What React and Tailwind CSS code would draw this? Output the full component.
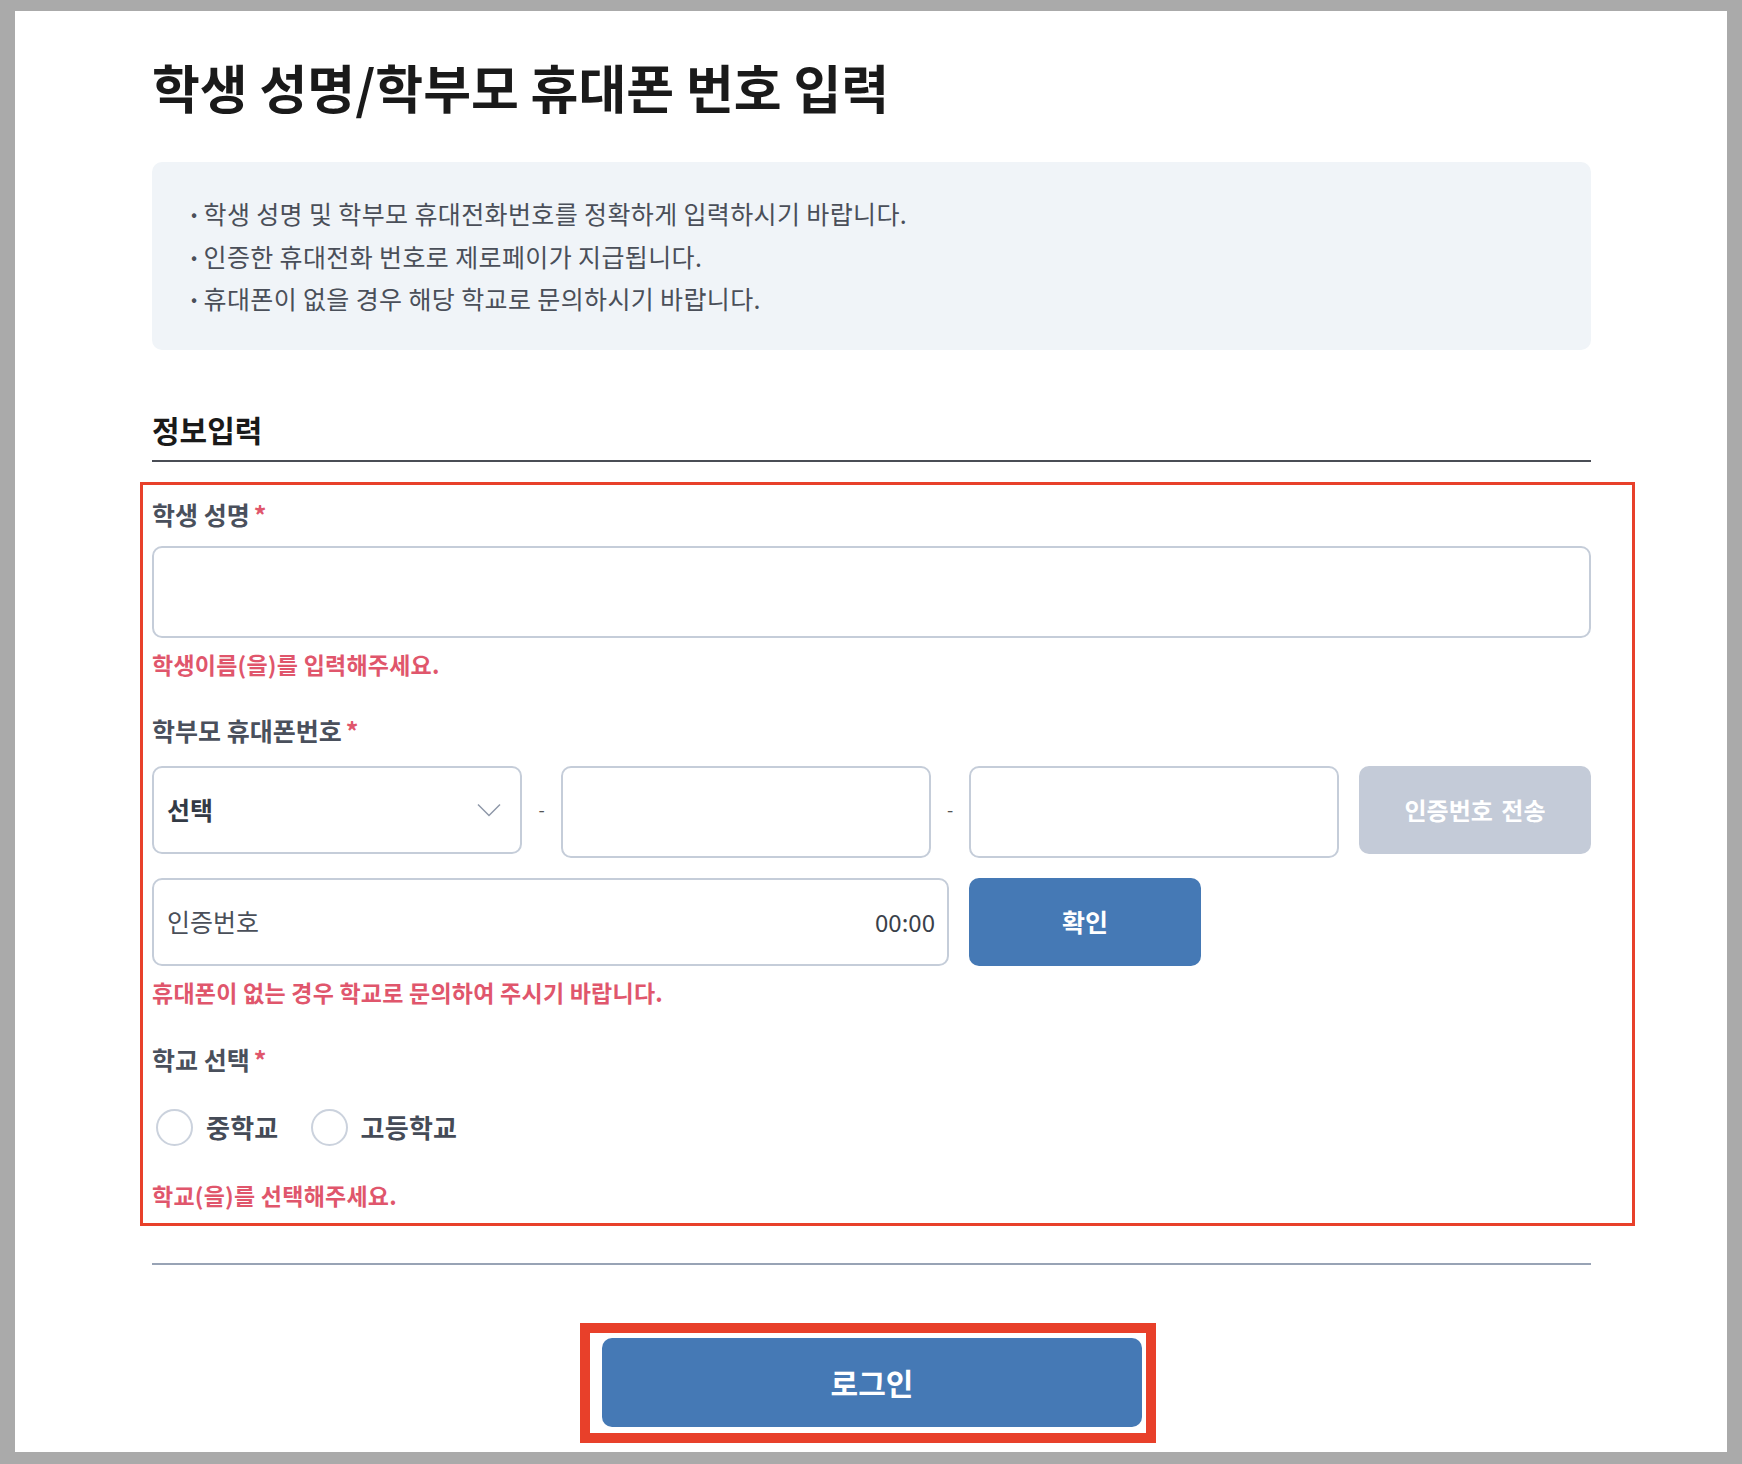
import React from "react";

const Req = () => <span className="ml-1 text-[#e0566c]">*</span>;

function Label({ children }) {
  return (
    <div className="text-[25px] font-bold leading-[32px] text-[#4a505c]">
      {children}
      <Req />
    </div>
  );
}

function Err({ children, className = "" }) {
  return (
    <div className={"text-[23px] font-semibold leading-[30px] text-[#e0566c] tracking-[0.01em] " + className}>
      {children}
    </div>
  );
}

function Radio({ label }) {
  return (
    <label className="flex items-center gap-[13px]">
      <span className="h-[37px] w-[37px] rounded-full border-2 border-[#cbd2dd] bg-white" />
      <span className="text-[26px] font-bold leading-[32px] text-[#454b57] tracking-[0.01em]">{label}</span>
    </label>
  );
}

export default function App() {
  return (
    <div className="min-h-[1464px] bg-[#aaaaaa] px-[15px] py-[11px] font-['Noto_Sans_CJK_KR','Noto_Sans',sans-serif]">
      <div className="bg-white pl-[137px] pr-[136px] pt-[42px] pb-[9px]">
        <h1 className="text-[52px] font-bold leading-[67px] text-[#1a1a1a]">
          학생 성명/학부모 휴대폰 번호 입력
        </h1>

        <div className="mt-[42px] rounded-[10px] bg-[#f0f4f8] px-[39px] py-[30px] text-[25px] leading-[42.5px] text-[#4a4f59] tracking-[0.015em]">
          <div className="flex"><span className="mr-[6px] text-[18px]">•</span>학생 성명 및 학부모 휴대전화번호를 정확하게 입력하시기 바랍니다.</div>
          <div className="flex"><span className="mr-[6px] text-[18px]">•</span>인증한 휴대전화 번호로 제로페이가 지급됩니다.</div>
          <div className="flex"><span className="mr-[6px] text-[18px]">•</span>휴대폰이 없을 경우 해당 학교로 문의하시기 바랍니다.</div>
        </div>

        <h2 className="mt-[59px] border-b-2 border-[#4a4d55] pb-[11px] text-[30px] font-bold leading-[40px] text-[#1a1a1a]">
          정보입력
        </h2>

        <div className="-ml-[12px] -mr-[44px] mt-[20px] border-[3px] border-[#e8402a] pl-[9px] pr-[41px] pt-[13px] pb-[13px]">
          <Label>학생 성명</Label>
          <input
            className="mt-[16px] block h-[92px] w-full rounded-[10px] border-2 border-[#c5cdd9] bg-white px-4 text-[23px] outline-none"
            type="text"
          />
          <Err className="mt-[11px]">학생이름(을)를 입력해주세요.</Err>

          <div className="mt-[35px]">
            <Label>학부모 휴대폰번호</Label>
          </div>
          <div className="mt-[20px] flex items-start">
            <div className="flex h-[88px] flex-1 items-center justify-between rounded-[10px] border-2 border-[#c5cdd9] bg-white pl-[13px] pr-[19px]">
              <span className="text-[25px] font-bold text-[#333a45]">선택</span>
              <svg width="24" height="14" viewBox="0 0 24 14" fill="none">
                <path d="M1 1.5 L12 12.5 L23 1.5" stroke="#8f98a8" strokeWidth="1.5" />
              </svg>
            </div>
            <div className="flex h-[88px] w-[39px] items-center justify-center text-[18px] text-[#555]">-</div>
            <input className="h-[92px] min-w-0 flex-1 rounded-[10px] border-2 border-[#c5cdd9] bg-white px-4 text-[23px] outline-none" type="text" />
            <div className="flex h-[88px] w-[38px] items-center justify-center text-[18px] text-[#555]">-</div>
            <input className="h-[92px] min-w-0 flex-1 rounded-[10px] border-2 border-[#c5cdd9] bg-white px-4 text-[23px] outline-none" type="text" />
            <button className="ml-[20px] h-[88px] w-[232px] rounded-[10px] bg-[#c4cbd8] text-[24px] font-bold text-white [word-spacing:3px]">
              인증번호 전송
            </button>
          </div>

          <div className="mt-[20px] flex items-start">
            <div className="flex h-[88px] w-[797px] items-center justify-between rounded-[10px] border-2 border-[#c5cdd9] bg-white pl-[13px] pr-[12px]">
              <span className="text-[25px] text-[#4a4f59]">인증번호</span>
              <span className="text-[24px] text-[#3a3f4a]">00:00</span>
            </div>
            <button className="ml-[20px] h-[88px] w-[232px] rounded-[10px] bg-[#4579b5] text-[25px] font-bold text-white">
              확인
            </button>
          </div>
          <Err className="mt-[11px]">휴대폰이 없는 경우 학교로 문의하여 주시기 바랍니다.</Err>

          <div className="mt-[36px]">
            <Label>학교 선택</Label>
          </div>
          <div className="mt-[34px] flex items-center gap-[32px] pl-[4px]">
            <Radio label="중학교" />
            <Radio label="고등학교" />
          </div>
          <Err className="mt-[34px]">학교(을)를 선택해주세요.</Err>
        </div>

        <div className="mt-[37px] h-[2px] bg-[#98a3b5]" />

        <div className="mt-[58px] flex justify-center">
          <div className="ml-[-7px] border-[10px] border-[#e8402a] bg-white pl-[12px] pr-[4px] pt-[5px] pb-[6px]">
            <button className="h-[89px] w-[540px] rounded-[10px] bg-[#4579b5] text-[30px] font-bold text-white">
              로그인
            </button>
          </div>
        </div>
      </div>
    </div>
  );
}
